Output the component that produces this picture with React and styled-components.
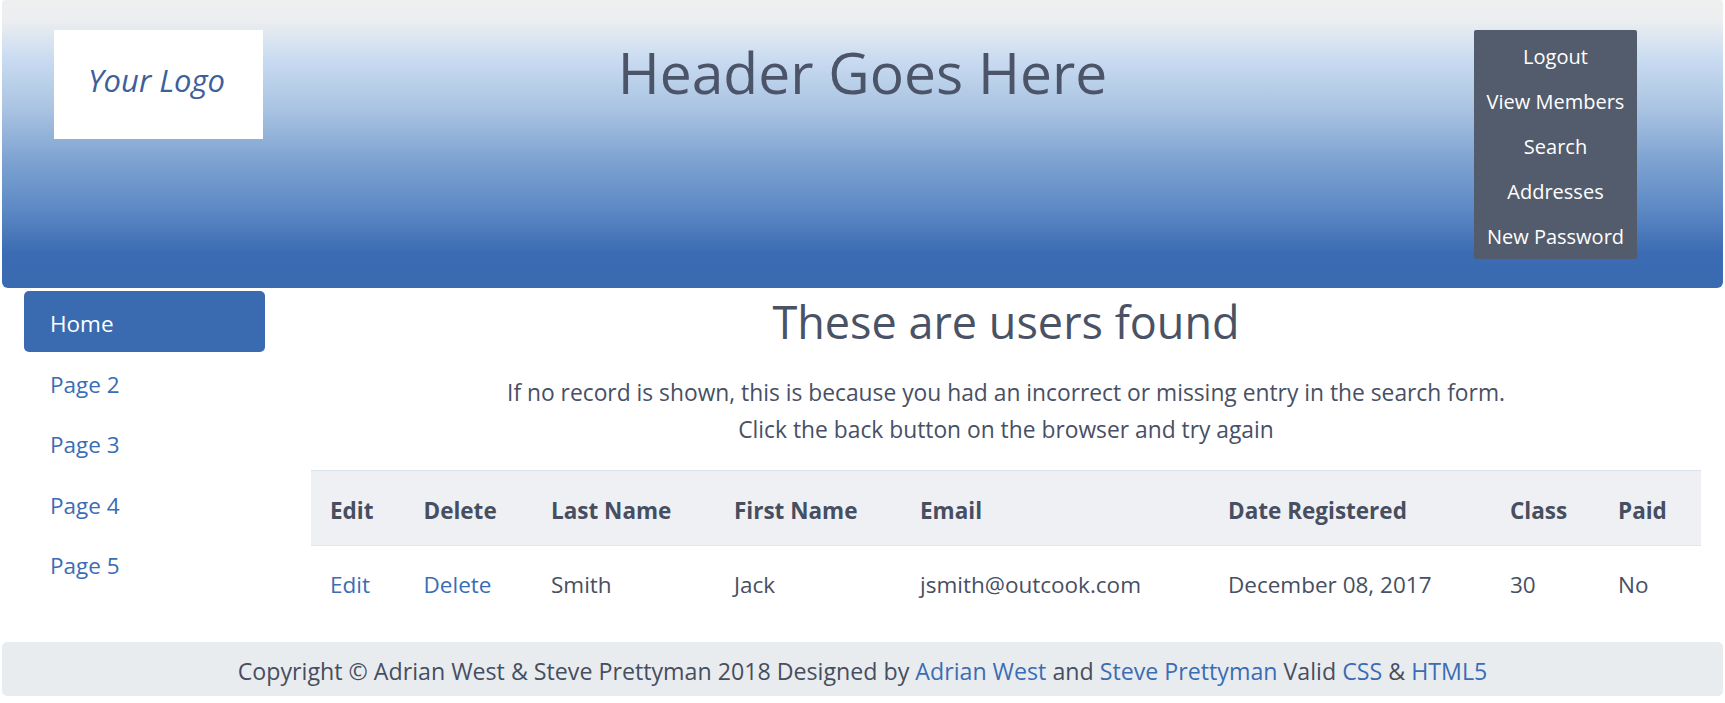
import React from 'react';
import styled, { createGlobalStyle } from 'styled-components';

const GlobalStyle = createGlobalStyle`
  html, body {
    margin: 0;
    padding: 0;
    background: #fff;
    font-family: 'Open Sans', 'Noto Sans', 'Liberation Sans', sans-serif;
    color: #495265;
  }
`;

const Page = styled.div`
  padding: 0 2px 6px 2px;
`;

const Header = styled.header`
  height: 288px;
  box-sizing: border-box;
  padding: 30px 52px 0 52px;
  display: grid;
  grid-template-columns: 1fr auto 1fr;
  align-items: start;
  border-radius: 3px 3px 6px 6px;
  background: linear-gradient(
    to bottom,
    #efefef 0%,
    #eceef0 7%,
    #cadcf1 20%,
    #a9c3e2 38%,
    #7fa4d2 55%,
    #5e8ac5 72%,
    #3b6bb2 88%,
    #3a6ab0 100%
  );
`;

const Logo = styled.div`
  width: 209px;
  height: 109px;
  background: #fff;
  display: flex;
  align-items: center;
  justify-content: center;
  font-style: italic;
  font-size: 31px;
  color: #3d5f9c;
  padding: 0 4px 10px 0;
  box-sizing: border-box;
`;

const Title = styled.h1`
  margin: 5px 0 0 0;
  font-weight: 400;
  font-size: 57px;
  line-height: 1.3;
  color: #4c5468;
  white-space: nowrap;
`;

const TopNav = styled.nav`
  justify-self: end;
  margin-right: 34px;
  width: 163px;
  padding: 4px 0 0 0;
  background: #535c6c;
  border-radius: 2px;
  display: flex;
  flex-direction: column;
`;

const TopNavLink = styled.a`
  display: block;
  height: 45px;
  line-height: 45px;
  text-align: center;
  color: #fff;
  font-size: 20px;
  text-decoration: none;
  white-space: nowrap;
`;

const Body = styled.div`
  display: grid;
  grid-template-columns: 241px minmax(0, 1fr);
  column-gap: 46px;
  padding: 3px 22px 0 22px;
`;

const Sidebar = styled.nav`
  display: flex;
  flex-direction: column;
`;

const SideLink = styled.a`
  display: flex;
  align-items: center;
  height: 60.5px;
  box-sizing: border-box;
  padding: 5px 0 0 26px;
  font-size: 22.5px;
  text-decoration: none;
  border-radius: 5px;
  color: ${({ $active }) => ($active ? '#fff' : '#3b6cb5')};
  background: ${({ $active }) => ($active ? '#3a6bb0' : 'transparent')};
`;

const Main = styled.main`
  display: flex;
  flex-direction: column;
  align-items: center;
  min-width: 0;
`;

const Heading = styled.h2`
  margin: 0;
  font-weight: 400;
  font-size: 45px;
  line-height: 62px;
  color: #4a5265;
`;

const Notice = styled.p`
  margin: 21px 0 0 0;
  font-size: 22.8px;
  line-height: 37px;
  text-align: center;
  color: #475064;
`;

const Table = styled.table`
  margin-top: 22px;
  width: 100%;
  border-collapse: collapse;
  table-layout: fixed;
  font-size: 22.5px;
`;

const HeadCell = styled.th`
  box-sizing: border-box;
  width: ${({ $w }) => $w}px;
  height: 75px;
  padding: 4px 0 0 19px;
  text-align: left;
  font-weight: 700;
  color: #464e60;
  background: #eef0f3;
  border-top: 1px solid #dde3ea;
  border-bottom: 1px solid #e2e6ea;
  white-space: nowrap;
`;

const Cell = styled.td`
  height: 76px;
  padding: 0 0 0 19px;
  color: #474f62;
  white-space: nowrap;
`;

const CellLink = styled.a`
  color: #3b6cb5;
  text-decoration: none;
`;

const Footer = styled.footer`
  margin-top: 20px;
  height: 54px;
  box-sizing: border-box;
  padding-top: 4px;
  display: flex;
  align-items: center;
  justify-content: center;
  background: #e9ecef;
  border-radius: 5px;
  font-size: 23.2px;
  color: #464e60;
  white-space: nowrap;
`;

const FooterLink = styled.a`
  color: #3b6cb5;
  text-decoration: none;
`;

const columns = [
  ['Edit', 93.5],
  ['Delete', 127.5],
  ['Last Name', 183],
  ['First Name', 186],
  ['Email', 308],
  ['Date Registered', 282],
  ['Class', 108],
  ['Paid', 102],
];

function App() {
  return (
    <Page>
      <GlobalStyle />
      <Header>
        <Logo>Your Logo</Logo>
        <Title>Header Goes Here</Title>
        <TopNav>
          <TopNavLink href="#">Logout</TopNavLink>
          <TopNavLink href="#">View Members</TopNavLink>
          <TopNavLink href="#">Search</TopNavLink>
          <TopNavLink href="#">Addresses</TopNavLink>
          <TopNavLink href="#">New Password</TopNavLink>
        </TopNav>
      </Header>
      <Body>
        <Sidebar>
          <SideLink href="#" $active>Home</SideLink>
          <SideLink href="#">Page 2</SideLink>
          <SideLink href="#">Page 3</SideLink>
          <SideLink href="#">Page 4</SideLink>
          <SideLink href="#">Page 5</SideLink>
        </Sidebar>
        <Main>
          <Heading>These are users found</Heading>
          <Notice>
            If no record is shown, this is because you had an incorrect or missing entry in the search form.
            <br />
            Click the back button on the browser and try again
          </Notice>
          <Table>
            <thead>
              <tr>
                {columns.map(([label, w]) => (
                  <HeadCell key={label} $w={w}>{label}</HeadCell>
                ))}
              </tr>
            </thead>
            <tbody>
              <tr>
                <Cell><CellLink href="#">Edit</CellLink></Cell>
                <Cell><CellLink href="#">Delete</CellLink></Cell>
                <Cell>Smith</Cell>
                <Cell>Jack</Cell>
                <Cell>jsmith@outcook.com</Cell>
                <Cell>December 08, 2017</Cell>
                <Cell>30</Cell>
                <Cell>No</Cell>
              </tr>
            </tbody>
          </Table>
        </Main>
      </Body>
      <Footer>
        Copyright ©&nbsp;Adrian West &amp; Steve Prettyman 2018 Designed by&nbsp;
        <FooterLink href="#">Adrian West</FooterLink>&nbsp;and&nbsp;
        <FooterLink href="#">Steve Prettyman</FooterLink>&nbsp;Valid&nbsp;
        <FooterLink href="#">CSS</FooterLink>&nbsp;&amp;&nbsp;
        <FooterLink href="#">HTML5</FooterLink>
      </Footer>
    </Page>
  );
}

export default App;
